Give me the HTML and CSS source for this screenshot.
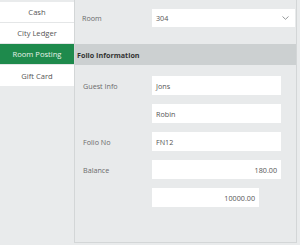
FILE: index.html
```html
<!DOCTYPE html>
<html>
<head>
<meta charset="utf-8">
<link rel="stylesheet" href="styles.css">
</head>
<body>
<div class="layout">
  <nav class="sidebar">
    <div class="tab">Cash</div>
    <div class="tab">City Ledger</div>
    <div class="tab active">Room Posting</div>
    <div class="tab">Gift Card</div>
  </nav>
  <section class="panel">
    <div class="room-row">
      <span class="label">Room</span>
      <div class="select">
        <span>304</span>
        <svg class="chev" width="7" height="4" viewBox="0 0 7 4"><path d="M0.5 0.5 L3.5 3.3 L6.5 0.5" fill="none" stroke="#8a8d8f" stroke-width="0.9"/></svg>
      </div>
    </div>
    <div class="header">Folio Information</div>
    <div class="form">
      <span class="label">Guest Info</span>
      <div class="field">Jons</div>
      <span></span>
      <div class="field">Robin</div>
      <span class="label">Folio No</span>
      <div class="field">FN12</div>
      <span class="label">Balance</span>
      <div class="field num">180.00</div>
      <span></span>
      <div class="field num short">10000.00</div>
    </div>
  </section>
</div>
</body>
</html>
```
FILE: styles.css
```css
* { box-sizing: border-box; }
html, body { margin: 0; padding: 0; }
body {
  background: #e9ebec;
  font-family: "Open Sans", "DejaVu Sans", sans-serif;
  font-size: 7.2px;
  color: #666;
  width: 300px;
  height: 245px;
  overflow: hidden;
}
.layout {
  display: flex;
  align-items: flex-start;
}
.sidebar {
  width: 74px;
  margin-top: 2px;
  display: flex;
  flex-direction: column;
}
.tab {
  height: 21px;
  background: #fff;
  border-bottom: 1px solid #e4e6e7;
  display: flex;
  align-items: center;
  justify-content: center;
  color: #555;
  font-size: 7.6px;
}
.tab:last-child { border-bottom: 0; }
.tab.active {
  background: #1e8a4c;
  color: #e6f2ea;
}
.panel {
  width: 223px;
  height: 243px;
  border: 1px solid #d3d6d7;
  border-top: 0;
  background: #e8eaeb;
  display: flex;
  flex-direction: column;
}
.room-row {
  display: grid;
  grid-template-columns: 70px 143px;
  align-items: center;
  align-content: start;
  padding: 9px 0 0 7px;
  height: 44px;
}
.label {
  color: #6b6b6b;
}
.select {
  height: 18px;
  background: #fff;
  display: flex;
  align-items: center;
  justify-content: space-between;
  padding: 0 6px 0 4px;
  color: #555;
}
.header {
  height: 21px;
  background: #ccd0d1;
  display: flex;
  align-items: center;
  padding-left: 2px;
  font-weight: bold;
  color: #333;
}
.form {
  display: grid;
  grid-template-columns: 69px 129px;
  grid-auto-rows: 19px;
  row-gap: 9px;
  align-items: center;
  padding: 11px 0 0 8px;
}
.field {
  height: 19px;
  background: #fff;
  display: flex;
  align-items: center;
  padding: 0 4px;
  color: #555;
}
.field.num { justify-content: flex-end; }
.field.short { width: 107px; }
```
